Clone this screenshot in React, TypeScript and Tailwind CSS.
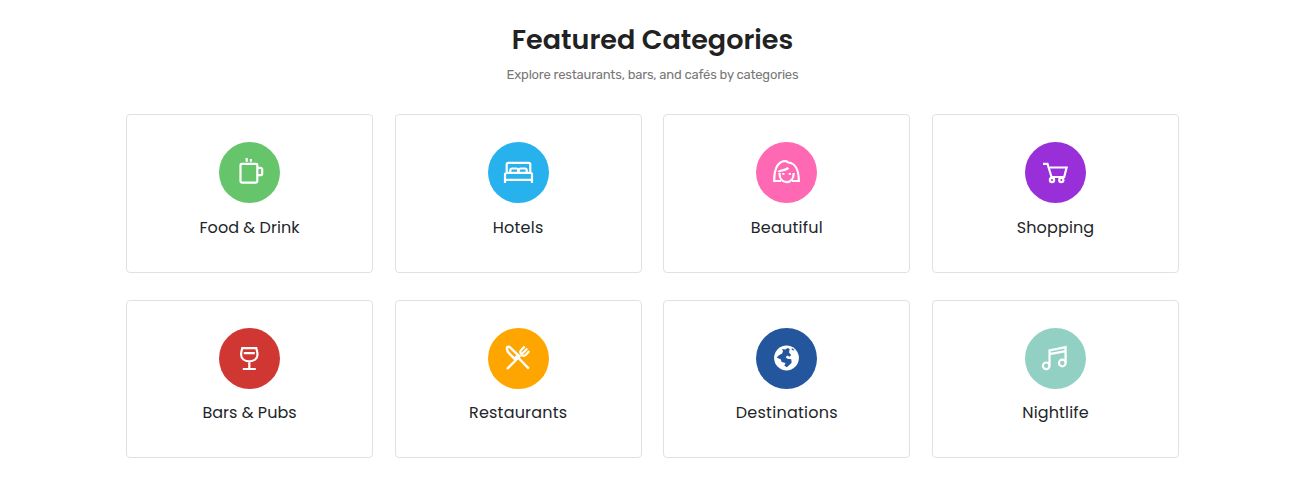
import type { ReactNode } from "react";

type Category = { name: string; color: string; spacing: string; icon: ReactNode };

const categories: Category[] = [
  {
    name: "Food & Drink",
    color: "bg-[#66c56b]",
    spacing: "tracking-[0.05px]",
    icon: (
      <>
        <rect x="21.5" y="21.8" width="16.8" height="18.8" rx="1.3" />
        <path d="M38.2 25.8h3.2q1.8 0 1.8 1.8v3.8q0 1.8-1.8 1.8h-3.2M27.7 16v3.8M31.9 17v2.8" />
      </>
    ),
  },
  {
    name: "Hotels",
    color: "bg-[#27b2ee]",
    spacing: "tracking-[0.25px]",
    icon: (
      <>
        <path d="M18.7 31v-8.5q0-1.6 1.6-1.6h20.4q1.6 0 1.6 1.6V31M17 41v-8.3q0-1.9 2-1.9h23.5q1.5 0 1.5 1.9V41M17 37.9h27M22.3 30.5v-2.2q0-1.8 1.8-1.8h4.3q1.8 0 1.8 1.8v2.2M30.8 30.5v-2.2q0-1.8 1.8-1.8h4.3q1.8 0 1.8 1.8v2.2" />
      </>
    ),
  },
  {
    name: "Beautiful",
    color: "bg-[#ff69b4]",
    spacing: "tracking-[0.25px]",
    icon: (
      <>
        <path d="M25 39H18.2C18.2 27 22 19 30 19l2.4 1.5C39 21 42.8 28 42.8 39H36" />
        <path d="M23.5 31c0 5.6 2.8 9.2 7 9.2s7.2-3.6 7.2-9.2M22.5 30c1-2.2 7.3-1 9.8-4.2" />
        <path d="M26.2 31.8h2.3M32.7 31.8h2.3" strokeWidth="1.8" />
      </>
    ),
  },
  {
    name: "Shopping",
    color: "bg-[#982fd8]",
    spacing: "tracking-[0.15px]",
    icon: (
      <>
        <path d="M18 21.8h4.5l4 13.2h12.7l2.4-9.5H24.8" />
        <circle cx="27" cy="38" r="2.1" />
        <circle cx="36.3" cy="38" r="2.1" />
      </>
    ),
  },
  {
    name: "Bars & Pubs",
    color: "bg-[#d03733]",
    spacing: "tracking-[0.02px]",
    icon: (
      <path d="M23.2 20.2h14.1q1.2 4 1.2 6.2c0 4.2-3.5 6.9-8.2 6.9s-8.2-2.7-8.2-6.9q0-2.2 1.1-6.2ZM24.8 25.2h11M30.3 33v7.9M23.8 41h13" />
    ),
  },
  {
    name: "Restaurants",
    color: "bg-[#ffa500]",
    spacing: "tracking-[0.2px]",
    icon: (
      <>
        <path d="M19.2 19.1c-.8 2.3.4 4.7 2.2 6.5l5.1 5.1 3.6-3.6-7.8-7.4q-1.5-1.4-3.1-.6ZM19 41l13.5-13.5M30.5 30l10.3 10.7" strokeWidth="2.4" />
        <path d="m36.7 18.4-3.5 3.7q-1.6 1.7-.4 3.4l1.2 1.8q2 1.3 3.9-.6l3.4-3.7M39.3 20.5l-5.1 5.2" strokeWidth="2.2" />
      </>
    ),
  },
  {
    name: "Destinations",
    color: "bg-[#23569d]",
    spacing: "tracking-[0.27px]",
    icon: (
      <>
        <circle cx="30.5" cy="30" r="12.4" fill="white" stroke="none" />
        <path
          d="m20.8 29.2 2.2-1.9 3.2-1.8.8-2.4-1-2.2 3.2.5 2.6-1.5 1.9 1-.7 3.5 2.1 2.5-1.2 1.8-2.7-1.2-1.5 1.8 1.8 1.4 3.8.6.3 3.4-2 2.1-2.8 2.5-2.5-1.7 1.3-2.7-4-.8-.7-2.6-4.1-2ZM36 20.2l2.6 1.7-1.4.6-1.7-1.1Z"
          className="fill-[#23569d]"
          stroke="none"
        />
      </>
    ),
  },
  {
    name: "Nightlife",
    color: "bg-[#92d0c4]",
    spacing: "tracking-[0.15px]",
    icon: (
      <>
        <circle cx="21.2" cy="37.8" r="3.3" />
        <circle cx="37.3" cy="35" r="3.3" />
        <path d="M24.5 37.8V22.3l16.1-3.1V35M24.5 26.2l16.1-3.1" />
      </>
    ),
  },
];

function CategoryCard({ name, color, spacing, icon }: Category) {
  return (
    <a className="flex h-[158.5px] flex-col items-center rounded-[4px] border border-[#dee2e6] pt-[27px]">
      <span className={`size-[61px] shrink-0 rounded-full ${color}`}>
        <svg viewBox="0 0 61 61" className="size-full" fill="none" stroke="white" strokeWidth="2.2">
          {icon}
        </svg>
      </span>
      <span className={`mt-[12.5px] whitespace-nowrap text-[16px] leading-6 ${spacing}`}>{name}</span>
    </a>
  );
}

export default function App() {
  return (
    <section className="flex h-[500px] flex-col bg-white pl-[126px] pr-[129px] pt-[20px] font-[Poppins,Inter,sans-serif] text-[#212529]">
      <h2 className="text-center text-[27px] font-semibold leading-10 text-[#222]">Featured Categories</h2>
      <p className="mt-[3px] text-center font-[Rubik,Roboto,sans-serif] text-[13px] leading-6 tracking-[-0.2px] text-[#777]">
        Explore restaurants, bars, and cafés by categories
      </p>
      <div className="mt-[27px] grid grid-cols-4 gap-x-[21.67px] gap-y-[27px]">
        {categories.map((category) => (
          <CategoryCard key={category.name} {...category} />
        ))}
      </div>
    </section>
  );
}
